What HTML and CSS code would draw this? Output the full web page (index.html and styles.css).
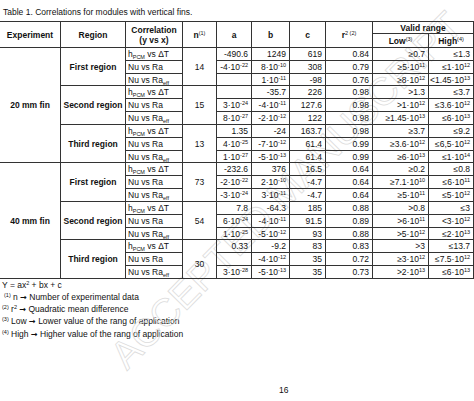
FILE: index.html
```html
<!DOCTYPE html>
<html lang="en">
<head>
<meta charset="utf-8">
<title>Table 1</title>
<link rel="stylesheet" href="styles.css">
</head>
<body>
<div class="page">
  <p class="caption">Table 1. Correlations for modules with vertical fins.</p>
  <table class="corr">
    <colgroup>
      <col class="c-exp"><col class="c-reg"><col class="c-cor"><col class="c-n"><col class="c-a"><col class="c-b"><col class="c-c"><col class="c-r"><col class="c-low"><col class="c-high">
    </colgroup>
    <thead>
      <tr class="hr1">
        <th rowspan="2">Experiment</th>
        <th rowspan="2">Region</th>
        <th rowspan="2">Correlation<br>(y vs x)</th>
        <th rowspan="2">n<sup>(1)</sup></th>
        <th rowspan="2">a</th>
        <th rowspan="2">b</th>
        <th rowspan="2">c</th>
        <th rowspan="2">r<sup>2 (2)</sup></th>
        <th colspan="2">Valid range</th>
      </tr>
      <tr class="hr2">
        <th>Low<sup>(3)</sup></th>
        <th>High<sup>(4)</sup></th>
      </tr>
    </thead>
    <tbody>
      <tr>
        <td class="exp" rowspan="9">20 mm fin</td>
        <td class="reg" rowspan="3">First region</td>
        <td class="cor">h<sub>PCM</sub> vs ΔT</td>
        <td class="n" rowspan="3">14</td>
        <td class="num">-490.6</td><td class="num">1249</td><td class="num">619</td><td class="num">0.84</td><td class="num">≥0.7</td><td class="num">≤1.3</td>
      </tr>
      <tr>
        <td class="cor">Nu vs Ra</td>
        <td class="num">-4·10<sup>-22</sup></td><td class="num">8·10<sup>-10</sup></td><td class="num">308</td><td class="num">0.79</td><td class="num">≥5·10<sup>11</sup></td><td class="num">≤1·10<sup>12</sup></td>
      </tr>
      <tr>
        <td class="cor">Nu vs Ra<sub>eff</sub></td>
        <td class="num"></td><td class="num">1·10<sup>-11</sup></td><td class="num">-98</td><td class="num">0.76</td><td class="num">≥8·10<sup>12</sup></td><td class="num">&lt;1.45·10<sup>13</sup></td>
      </tr>
      <tr>
        <td class="reg" rowspan="3">Second region</td>
        <td class="cor">h<sub>PCM</sub> vs ΔT</td>
        <td class="n" rowspan="3">15</td>
        <td class="num"></td><td class="num">-35.7</td><td class="num">226</td><td class="num">0.98</td><td class="num">&gt;1.3</td><td class="num">≤3.7</td>
      </tr>
      <tr>
        <td class="cor">Nu vs Ra</td>
        <td class="num">3·10<sup>-24</sup></td><td class="num">-4·10<sup>-11</sup></td><td class="num">127.6</td><td class="num">0.98</td><td class="num">&gt;1·10<sup>12</sup></td><td class="num">≤3.6·10<sup>12</sup></td>
      </tr>
      <tr>
        <td class="cor">Nu vs Ra<sub>eff</sub></td>
        <td class="num">8·10<sup>-27</sup></td><td class="num">-2·10<sup>-12</sup></td><td class="num">122</td><td class="num">0.98</td><td class="num">≥1.45·10<sup>13</sup></td><td class="num">≤6·10<sup>13</sup></td>
      </tr>
      <tr>
        <td class="reg" rowspan="3">Third region</td>
        <td class="cor">h<sub>PCM</sub> vs ΔT</td>
        <td class="n" rowspan="3">13</td>
        <td class="num">1.35</td><td class="num">-24</td><td class="num">163.7</td><td class="num">0.98</td><td class="num">≥3.7</td><td class="num">≤9.2</td>
      </tr>
      <tr>
        <td class="cor">Nu vs Ra</td>
        <td class="num">4·10<sup>-25</sup></td><td class="num">-7·10<sup>-12</sup></td><td class="num">61.4</td><td class="num">0.99</td><td class="num">≥3.6·10<sup>12</sup></td><td class="num">≤6,5·10<sup>12</sup></td>
      </tr>
      <tr>
        <td class="cor">Nu vs Ra<sub>eff</sub></td>
        <td class="num">1·10<sup>-27</sup></td><td class="num">-5·10<sup>-13</sup></td><td class="num">61.4</td><td class="num">0.99</td><td class="num">≥6·10<sup>13</sup></td><td class="num">≤1·10<sup>14</sup></td>
      </tr>

      <tr>
        <td class="exp" rowspan="9">40 mm fin</td>
        <td class="reg" rowspan="3">First region</td>
        <td class="cor">h<sub>PCM</sub> vs ΔT</td>
        <td class="n" rowspan="3">73</td>
        <td class="num">-232.6</td><td class="num">376</td><td class="num">16.5</td><td class="num">0.64</td><td class="num">≥0.2</td><td class="num">≤0.8</td>
      </tr>
      <tr>
        <td class="cor">Nu vs Ra</td>
        <td class="num">-2·10<sup>-22</sup></td><td class="num">2·10<sup>-10</sup></td><td class="num">-4.7</td><td class="num">0.64</td><td class="num">≥7.1·10<sup>10</sup></td><td class="num">≤6·10<sup>11</sup></td>
      </tr>
      <tr>
        <td class="cor">Nu vs Ra<sub>eff</sub></td>
        <td class="num">-3·10<sup>-24</sup></td><td class="num">3·10<sup>-11</sup></td><td class="num">-4.7</td><td class="num">0.64</td><td class="num">≥5·10<sup>11</sup></td><td class="num">≤5·10<sup>12</sup></td>
      </tr>
      <tr>
        <td class="reg" rowspan="3">Second region</td>
        <td class="cor">h<sub>PCM</sub> vs ΔT</td>
        <td class="n" rowspan="3">54</td>
        <td class="num">7.8</td><td class="num">-64.3</td><td class="num">185</td><td class="num">0.88</td><td class="num">&gt;0.8</td><td class="num">≤3</td>
      </tr>
      <tr>
        <td class="cor">Nu vs Ra</td>
        <td class="num">6·10<sup>-24</sup></td><td class="num">-4·10<sup>-11</sup></td><td class="num">91.5</td><td class="num">0.89</td><td class="num">&gt;6·10<sup>11</sup></td><td class="num">&lt;3·10<sup>12</sup></td>
      </tr>
      <tr>
        <td class="cor">Nu vs Ra<sub>eff</sub></td>
        <td class="num">1·10<sup>-25</sup></td><td class="num">-5·10<sup>-12</sup></td><td class="num">93</td><td class="num">0.88</td><td class="num">&gt;5·10<sup>12</sup></td><td class="num">≤2·10<sup>13</sup></td>
      </tr>
      <tr>
        <td class="reg" rowspan="3">Third region</td>
        <td class="cor">h<sub>PCM</sub> vs ΔT</td>
        <td class="n n-low" rowspan="3">30</td>
        <td class="num">0.33</td><td class="num">-9.2</td><td class="num">83</td><td class="num">0.83</td><td class="num">&gt;3</td><td class="num">≤13.7</td>
      </tr>
      <tr>
        <td class="cor">Nu vs Ra</td>
        <td class="num"></td><td class="num">-4·10<sup>-12</sup></td><td class="num">35</td><td class="num">0.72</td><td class="num">≥3·10<sup>12</sup></td><td class="num">≤7.5·10<sup>12</sup></td>
      </tr>
      <tr>
        <td class="cor">Nu vs Ra<sub>eff</sub></td>
        <td class="num">3·10<sup>-28</sup></td><td class="num">-5·10<sup>-13</sup></td><td class="num">35</td><td class="num">0.73</td><td class="num">&gt;2·10<sup>13</sup></td><td class="num">≤6·10<sup>13</sup></td>
      </tr>
    </tbody>
  </table>

  <div class="notes">
    <p>Y = ax<sup>2</sup> + bx + c</p>
    <p class="ind"><sup>(1)</sup> n <span class="arrow">→</span> Number of experimental data</p>
    <p><sup>(2)</sup> r<sup>2</sup> <span class="arrow">→</span> Quadratic mean difference</p>
    <p><sup>(3)</sup> Low <span class="arrow">→</span> Lower value of the rang of application</p>
    <p><sup>(4)</sup> High <span class="arrow">→</span> Higher value of the rang of application</p>
  </div>

  <p class="pageno">16</p>

  <div class="watermark" aria-hidden="true">ACCEPTED MANUSCRIPT</div>
</div>
</body>
</html>
```

FILE: styles.css
```css
html, body {
  margin: 0;
  padding: 0;
  background: #fff;
}

.page {
  position: relative;
  width: 474px;
  height: 401px;
  overflow: hidden;
  font-family: "Liberation Sans", Arial, sans-serif;
  font-size: 8.5px;
  color: #111;
}

.caption {
  margin: 0;
  padding: 7px 0 0 3px;
  height: 21px;
  box-sizing: border-box;
  line-height: 10px;
}

sup, sub {
  font-size: 5.5px;
  line-height: 0;
}
sup { vertical-align: 3.5px; }
sub { vertical-align: -1.5px; }

.corr {
  border-collapse: collapse;
  table-layout: fixed;
  width: 475px;
  margin-left: -1px;
  position: relative;
  z-index: 1;
}

.c-exp { width: 61px; }
.c-reg { width: 65px; }
.c-cor { width: 57px; }
.c-n { width: 34px; }
.c-a { width: 35px; }
.c-b { width: 38px; }
.c-c { width: 36px; }
.c-r { width: 47px; }
.c-low { width: 56px; }
.c-high { width: 45px; }

.corr th,
.corr td {
  border: 1px solid #333;
  padding: 0;
  line-height: 10px;
  white-space: nowrap;
  overflow: hidden;
}

.corr th {
  font-weight: bold;
  text-align: center;
  vertical-align: middle;
}
.corr th sup { font-weight: normal; }

.hr1 { height: 12px; }
.hr2 { height: 14px; }

.corr tbody tr { height: 12.83px; }

.exp,
.reg {
  font-weight: bold;
  text-align: center;
  vertical-align: middle;
}

.cor {
  text-align: left;
  padding-left: 2px !important;
}

.n {
  text-align: center;
  vertical-align: middle;
}
.n-low { padding-top: 10px !important; }

.num {
  text-align: right;
  padding-right: 3px !important;
}

.notes {
  padding-left: 2px;
}
.notes p {
  margin: 0;
  line-height: 12.2px;
  height: 12.2px;
}
.notes .ind { padding-left: 2px; }

.arrow {
  font-family: "DejaVu Sans", sans-serif;
  font-weight: bold;
  font-size: 8px;
}

.pageno {
  margin: 45px 0 0 279px;
  line-height: 10px;
}

.watermark {
  position: absolute;
  left: 286px;
  top: 190px;
  transform: translate(-50%, -50%) rotate(-45.5deg);
  font-size: 39px;
  line-height: 1;
  white-space: nowrap;
  color: rgba(0, 0, 0, 0.02);
  -webkit-text-stroke: 0.8px #dcdcdc;
  pointer-events: none;
  z-index: 0;
}
```
